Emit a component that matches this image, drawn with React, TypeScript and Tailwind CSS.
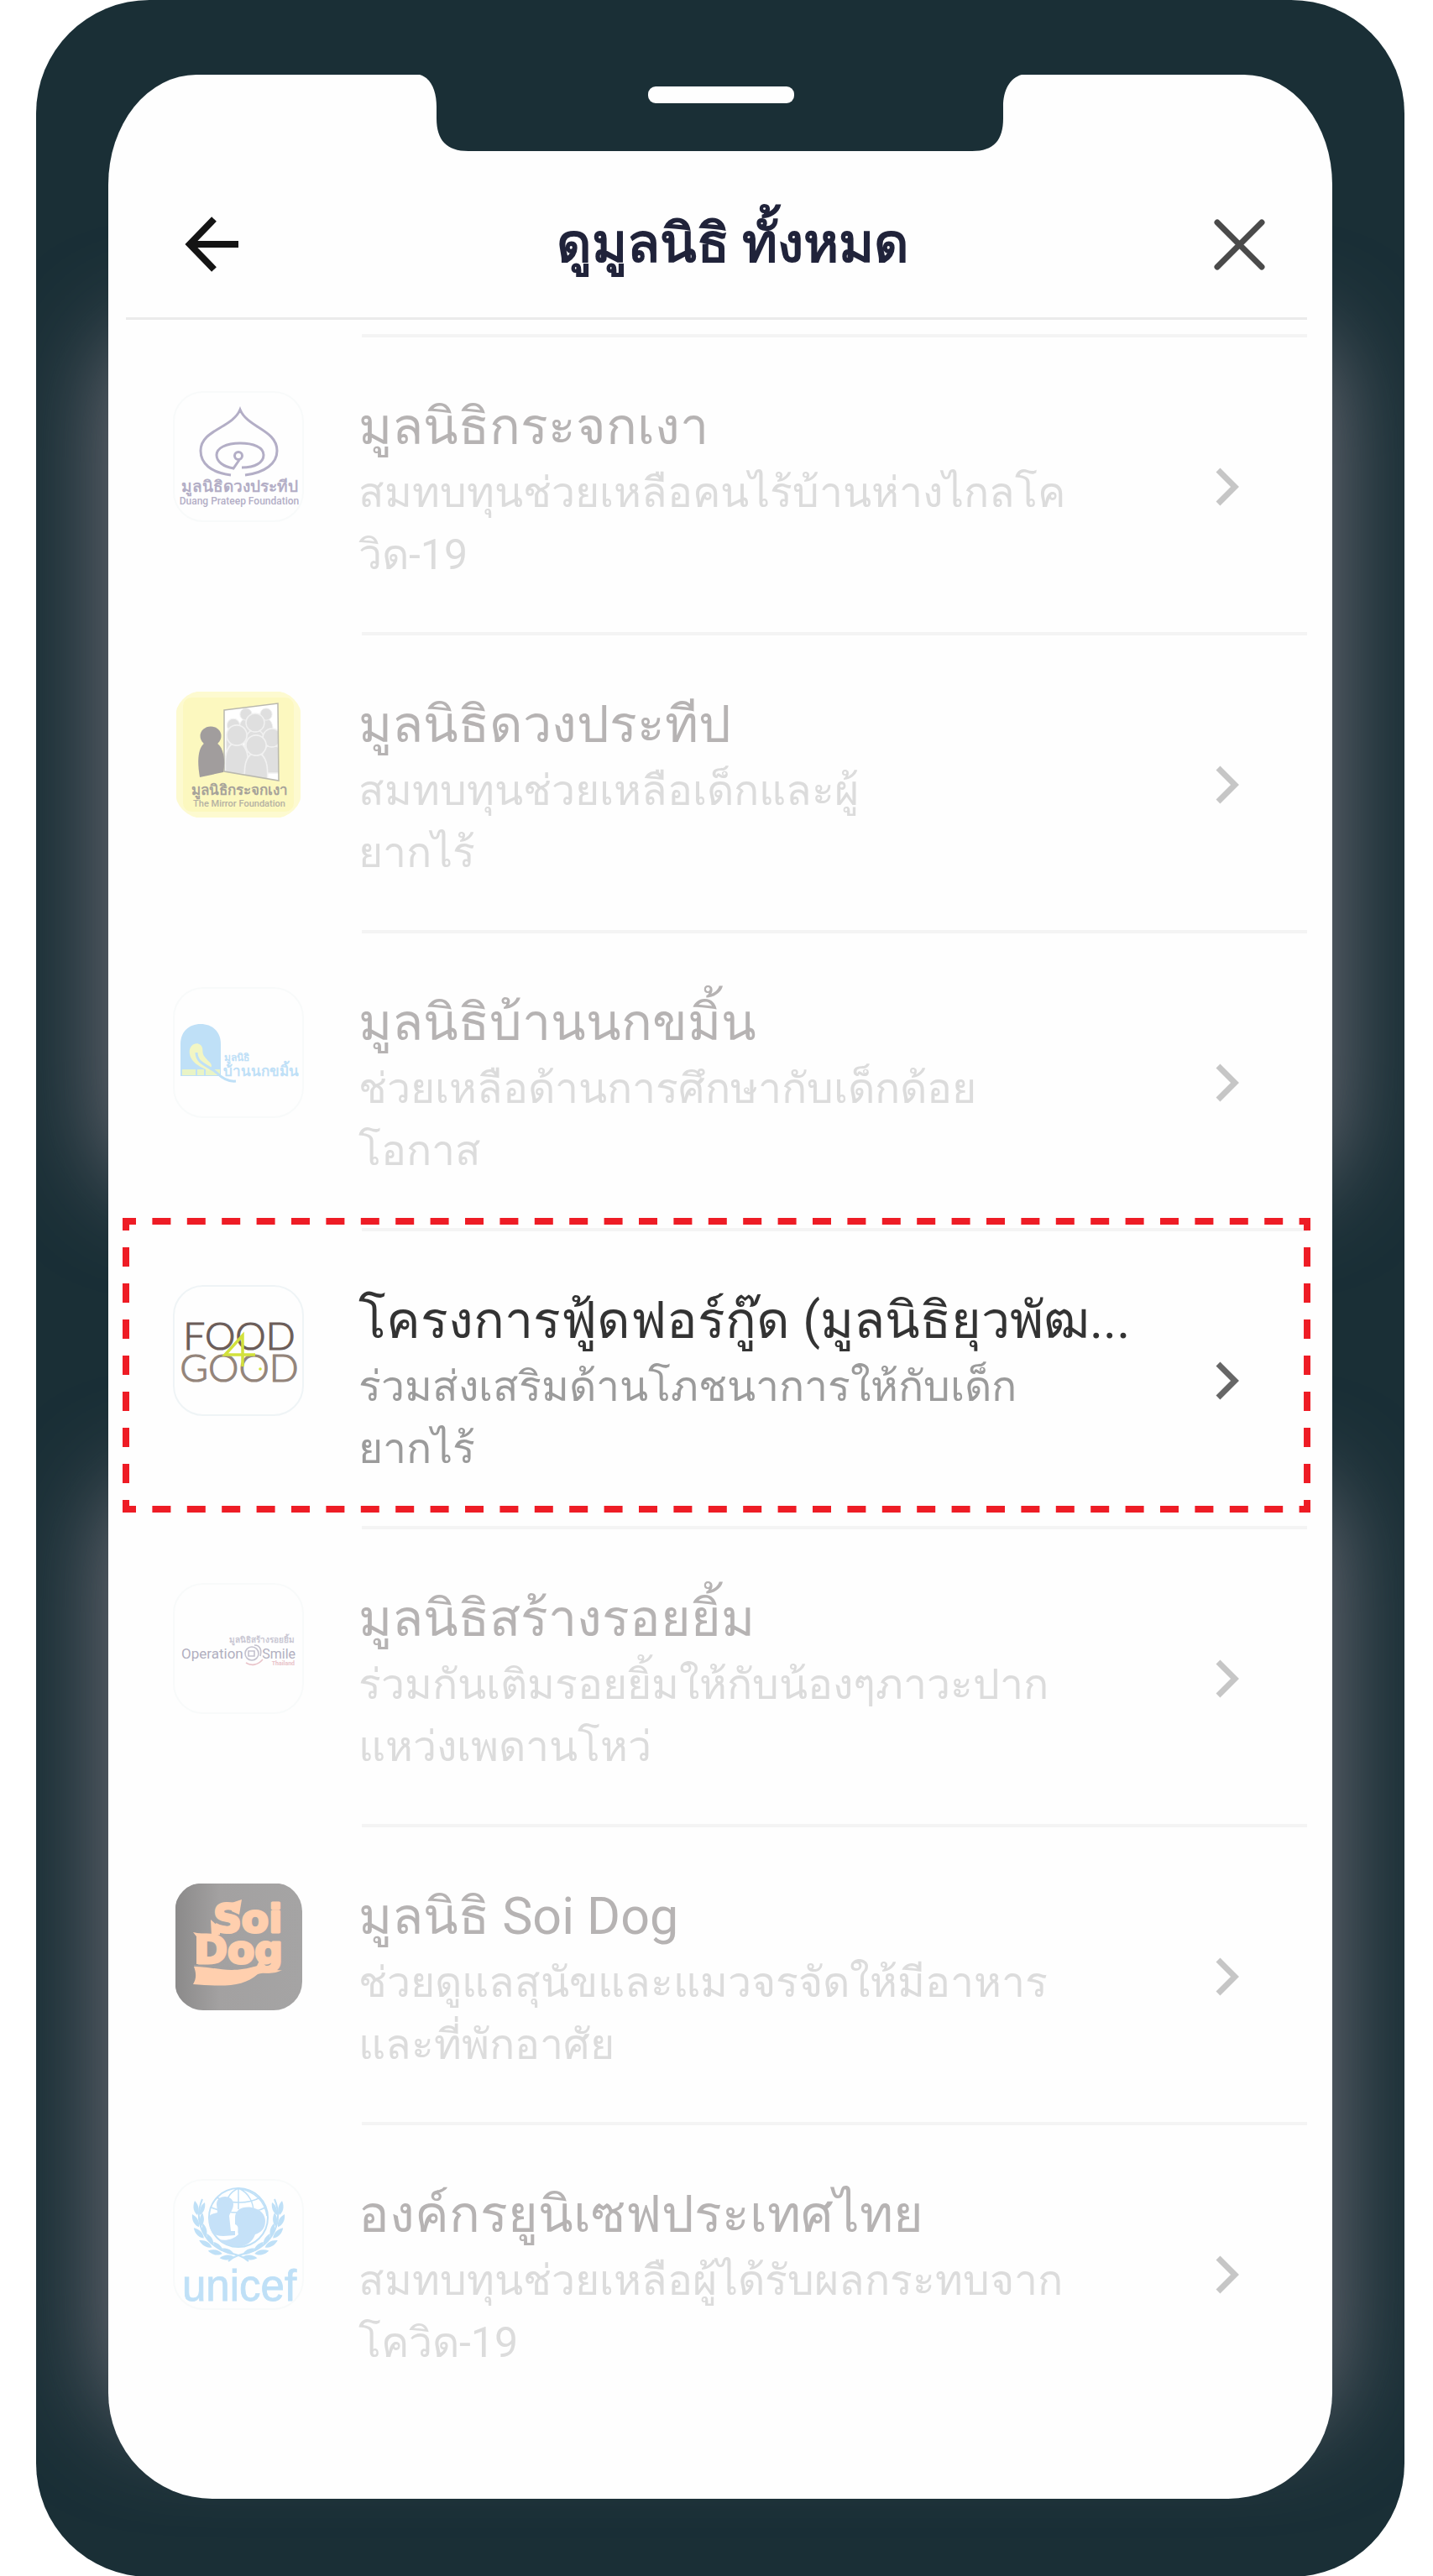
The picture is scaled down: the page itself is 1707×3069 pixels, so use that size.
import type { ReactNode } from "react";

const LILAC = "#b3aec6";
const SKY = "#bfe0f7";

function DuangPrateepLogo() {
  return (
    <>
      <g fill="none" stroke={LILAC} strokeWidth="3">
        <path d="M69 100C45 97 33 86 33 71C33 46 71 44 80 22C89 44 124 46 124 71C124 86 110 97 86 100" />
        <path d="M82 91C98 91 108 85 108 76C108 67 96 62 80 62C63 62 52 68 52 76C52 84 60 90 72 92L79 82" />
        <circle cx="78" cy="77" r="4.5" />
      </g>
      <text x="79" y="120" textAnchor="middle" fontSize="19" fontWeight="700" fill={LILAC}>มูลนิธิดวงประทีป</text>
      <text x="79" y="135" textAnchor="middle" fontSize="12" fontWeight="500" fill={LILAC}>Duang Prateep Foundation</text>
    </>
  );
}

function Figure({ x, y, s }: { x: number; y: number; s: number }) {
  return (
    <g transform={`translate(${x} ${y}) scale(${s})`} fill="#dfdfdf" stroke="#f1f1f1" strokeWidth="1.5">
      <path d="M-12 42C-13 28 -13 16 -6 10L6 10C13 16 13 28 12 42Z" />
      <ellipse cx="0" cy="0" rx="11" ry="11" />
    </g>
  );
}

function MirrorLogo() {
  return (
    <>
      <rect x="4" y="3" width="148" height="150" rx="24" fill="#fdfad0" />
      <rect x="12" y="10" width="132" height="136" rx="10" fill="#fcf8bf" />
      <clipPath id="mirror-glass">
        <path d="M61 25L125 17L126 109L61 98Z" />
      </clipPath>
      <g clipPath="url(#mirror-glass)">
        <rect x="60" y="15" width="70" height="96" fill="#fff" />
        <Figure x={87} y={30} s={0.65} />
        <Figure x={111} y={30} s={0.65} />
        <Figure x={72} y={43} s={0.7} />
        <Figure x={98} y={40} s={1} />
        <Figure x={118} y={58} s={1} />
        <Figure x={76} y={55} s={1.1} />
        <Figure x={99} y={67} s={1.1} />
      </g>
      <path d="M61 25L125 17L126 109L61 98Z" fill="none" stroke="#b9b8ae" strokeWidth="1.5" />
      <g fill="#a19d9d">
        <ellipse cx="45" cy="56" rx="12.5" ry="11.5" />
        <path d="M38 64L52 64C60 69 63 84 60 99L32 105C29 88 29 70 38 64Z" />
      </g>
      <text x="79" y="126" textAnchor="middle" fontSize="17" fontWeight="700" fill="#a7a39a">มูลนิธิกระจกเงา</text>
      <text x="79" y="140" textAnchor="middle" fontSize="11" fontWeight="500" fill="#b5b1a3">The Mirror Foundation</text>
    </>
  );
}

function BaanNokkaminLogo() {
  return (
    <>
      <path d="M9 106V68C9 53 19 44 33 44C47 44 57 53 57 68V106Z" fill={SKY} />
      <path d="M11 98H56V105H11Z" fill="#e9f4c6" />
      <path d="M28 98V105M38 98V105" stroke={SKY} strokeWidth="2" />
      <path d="M20 80C18 70 27 64 33 69C37 73 34 77 37 82C41 88 46 90 46 94L43 100C32 95 22 90 20 80Z" fill="#f2f6c4" />
      <path d="M28 78C28 92 44 94 52 102C59 109 66 113 75 112" fill="none" stroke={SKY} strokeWidth="3" />
      <text x="61" y="88" fontSize="12" fontWeight="700" fill={SKY}>มูลนิธิ</text>
      <text x="60" y="106" fontSize="17" fontWeight="700" fill={SKY}>บ้านนกขมิ้น</text>
    </>
  );
}

function FoodForGoodLogo() {
  return (
    <>
      <text x="79" y="77" textAnchor="middle" fontSize="46" strokeWidth="1.2" className="font-[Lato] font-light" fill="#6b5d59" stroke="#6b5d59">FOOD</text>
      <text x="79" y="115" textAnchor="middle" fontSize="46" strokeWidth="1.2" className="font-[Lato] font-light" fill="#93847a" stroke="#93847a">GOOD</text>
      <path d="M83 97V60L62 83H98" fill="none" stroke="#d2e13c" strokeWidth="3.5" />
      <circle cx="104" cy="100" r="1.8" fill="#d2e13c" />
    </>
  );
}

function OperationSmileLogo() {
  return (
    <>
      <text x="145" y="71" textAnchor="end" fontSize="10" fontWeight="600" fill="#c9c7d3">มูลนิธิสร้างรอยยิ้ม</text>
      <text x="10" y="90" fontSize="17" fill="#b1afbf">Operation</text>
      <text x="146" y="90" textAnchor="end" fontSize="16" fill="#b1afbf">Smile</text>
      <g fill="none" strokeWidth="1.6" stroke="#c3c1ce">
        <circle cx="94" cy="84" r="8" />
        <path d="M90 81H97V87H90ZM97 74C104 74 106 80 104 87" />
        <path d="M87 95C93 99 101 98 107 91" stroke="#e9c3c9" />
      </g>
      <text x="145" y="98" textAnchor="end" fontSize="7" fontWeight="700" fill="#e9c3c9">Thailand</text>
    </>
  );
}

function SoiDogLogo() {
  return (
    <>
      <linearGradient id="soi-dog-shade">
        <stop offset="0" stopColor="#8b8a8a" />
        <stop offset="0.35" stopColor="#a3a1a1" />
        <stop offset="1" stopColor="#a5a4a4" />
      </linearGradient>
      <rect x="3" y="3" width="151" height="151" rx="28" fill="url(#soi-dog-shade)" />
      <g fill="#ffcfae" stroke="#ffcfae" strokeWidth="3" strokeLinejoin="round" className="font-['DejaVu_Sans'] font-bold">
        <text x="48" y="61" fontSize="47">Soi</text>
        <text x="26" y="98" fontSize="47">Dog</text>
      </g>
      <path d="M24 61L34 63V99H28V66ZM45 46L56 56V64L46 66ZM70 26L82 22L79 40L70 36Z" fill="#ffcfae" />
      <path d="M25 102C48 101 66 112 100 101L104 93C108 101 118 108 130 106C120 112 108 108 101 111C84 126 62 126 24 123C28 116 28 110 25 102Z" fill="#ffcfae" />
      <path d="M25 101C52 100 72 107 100 100" fill="none" stroke="#a3a1a1" strokeWidth="2" />
    </>
  );
}

function UnicefLogo() {
  const leaves = [0, 1, 2, 3, 4, 5];
  return (
    <>
      <circle cx="78" cy="46" r="35" fill="#fff" stroke={SKY} strokeWidth="2" />
      <g fill="none" stroke={SKY} strokeWidth="1.5">
        <path d="M78 11V36M78 11C64 17 62 30 62 40M78 11C92 17 96 30 96 40M78 11C102 16 110 30 112 44M52 22C68 30 90 30 104 22M46 34C64 42 96 42 110 34" />
      </g>
      <g fill="#c5e1f8">
        <path d="M52 30C52 18 72 18 72 30C72 36 68 40 67 44L69 62L74 62V67L60 68C48 68 44 64 43 50C42 42 46 42 53 40Z" />
        <path d="M74 46C74 36 84 32 94 34C104 36 110 42 110 50C110 60 104 64 98 66C94 78 82 82 72 80C64 79 58 77 54 72C64 74 72 72 78 66C76 62 80 56 74 54Z" />
      </g>
      {[1, -1].map((dir) => (
        <g key={dir} transform={dir === 1 ? undefined : "translate(156 0) scale(-1 1)"}>
          <path d="M35 24C24 50 36 78 66 88C76 90 84 92 90 98" fill="none" stroke={SKY} strokeWidth="2" />
          {leaves.map((i) => (
            <g key={i} transform={`rotate(${-i * 17} 78 44)`}>
              <path d="M29 43C23 38 24 30 26 26C31 31 32 38 29 43Z" fill={SKY} />
              <path d="M32 43C31 36 34 30 38 28C39 34 37 40 32 43Z" fill={SKY} />
            </g>
          ))}
        </g>
      ))}
      <text x="79" y="145" textAnchor="middle" fontSize="51" strokeWidth="0.8" className="font-['Liberation_Sans']" fill={SKY} stroke={SKY}>unicef</text>
    </>
  );
}

type Foundation = {
  name: string;
  lines: [string, string];
  logo: ReactNode;
  frame: string;
  active?: boolean;
};

const foundations: Foundation[] = [
  { name: "มูลนิธิกระจกเงา", lines: ["สมทบทุนช่วยเหลือคนไร้บ้านห่างไกลโค", "วิด-19"], logo: <DuangPrateepLogo />, frame: "border-[#f8fafa]" },
  { name: "มูลนิธิดวงประทีป", lines: ["สมทบทุนช่วยเหลือเด็กและผู้", "ยากไร้"], logo: <MirrorLogo />, frame: "border-transparent" },
  { name: "มูลนิธิบ้านนกขมิ้น", lines: ["ช่วยเหลือด้านการศึกษากับเด็กด้อย", "โอกาส"], logo: <BaanNokkaminLogo />, frame: "border-[#f8fafa]" },
  { name: "โครงการฟู้ดฟอร์กู๊ด (มูลนิธิยุวพัฒ...", lines: ["ร่วมส่งเสริมด้านโภชนาการให้กับเด็ก", "ยากไร้"], logo: <FoodForGoodLogo />, frame: "border-[#eff4f6]", active: true },
  { name: "มูลนิธิสร้างรอยยิ้ม", lines: ["ร่วมกันเติมรอยยิ้มให้กับน้องๆภาวะปาก", "แหว่งเพดานโหว่"], logo: <OperationSmileLogo />, frame: "border-[#f8fafa]" },
  { name: "มูลนิธิ Soi Dog", lines: ["ช่วยดูแลสุนัขและแมวจรจัดให้มีอาหาร", "และที่พักอาศัย"], logo: <SoiDogLogo />, frame: "border-transparent" },
  { name: "องค์กรยูนิเซฟประเทศไทย", lines: ["สมทบทุนช่วยเหลือผู้ได้รับผลกระทบจาก", "โควิด-19"], logo: <UnicefLogo />, frame: "border-[#f8fafa]" },
];

function DashedFrame() {
  return (
    <svg className="pointer-events-none absolute -top-3 -left-1 h-[351px] w-[calc(100%+8px)]" fill="none" stroke="#ee1c25" strokeWidth="8" aria-hidden="true">
      <g strokeDasharray="22 19.4">
        <line x1="-6" y1="4" x2="100%" y2="4" />
        <line x1="-6" y1="347" x2="100%" y2="347" />
      </g>
      <g strokeDasharray="23 20">
        <line x1="4" y1="-8" x2="4" y2="100%" />
        <line x1="99.72%" y1="-8" x2="99.72%" y2="100%" />
      </g>
    </svg>
  );
}

function FoundationRow({ item }: { item: Foundation }) {
  return (
    <li className="relative">
      <a href="#" className="flex h-[355px]">
        <div className="w-[281px] shrink-0 pt-[68px] pl-14">
          <svg viewBox="2 2 152 152" className={`size-[156px] rounded-[36px] border-2 ${item.frame}`} aria-hidden="true">
            {item.logo}
          </svg>
        </div>
        <div className="flex min-w-0 grow items-center justify-between border-t-4 border-[#f4f4f4] pt-1 pr-20">
          <div className="-ml-1 pt-2 whitespace-nowrap">
            <h2 className={`mb-1 text-[61px] leading-[76px] ${item.active ? "text-[#333333]" : "text-[#b6b3b3]"}`}>{item.name}</h2>
            <p className={`text-[50px] leading-[74px] ${item.active ? "text-[#9b9b9b]" : "text-[#dcdcdc]"}`}>
              {item.lines[0]}
              <br />
              {item.lines[1]}
            </p>
          </div>
          <svg width="30" height="48" viewBox="0 0 30 48" fill="none" strokeWidth="7" className={item.active ? "shrink-0 stroke-[#666666]" : "shrink-0 stroke-[#c6c6c6]"} aria-hidden="true">
            <path d="M4 4L24 24L4 44" />
          </svg>
        </div>
      </a>
      {item.active && <DashedFrame />}
    </li>
  );
}

export default function App() {
  return (
    <div className="bg-white font-[Roboto,sans-serif]">
      <main className="relative isolate mr-[34px] ml-[43px] overflow-hidden rounded-[135px] bg-[#1a2f36] px-[86px] pt-[89px] pb-[93px]">
        <div className="absolute inset-x-[86px] top-[400px] -z-10 h-[1010px] rounded-[60px] shadow-[0_0_120px_#7a7780]" />
        <div className="absolute inset-x-[86px] top-[1770px] -z-10 h-[1110px] rounded-[60px] shadow-[0_0_120px_#7a7780]" />
        <div className="bg-[#fefefe] pb-[94px] [border-radius:105px_105px_124px_124px/131px_131px_126px_126px]">
          <svg width="717" height="91" viewBox="0 0 717 91" className="mx-auto" aria-hidden="true">
            <path d="M0 0C14 4 20 20 20 38V52C20 78 32 91 58 91H658C684 91 695 78 695 52V38C695 18 703 4 717 0Z" fill="#1a2f36" />
            <rect x="272" y="14" width="174" height="20" rx="9" fill="#fefefe" />
          </svg>
          <div className="pr-[30px] pl-[21px]">
            <header className="flex h-[201px] items-center justify-between border-b-3 border-[#ebebeb] pt-6 pr-[50px] pl-[70px]">
              <button type="button" aria-label="ย้อนกลับ">
                <svg width="64" height="66" viewBox="0 0 64 66" fill="none" stroke="#141414" strokeWidth="8" aria-hidden="true">
                  <path d="M64 33H6M35 3L6 33L35 63" />
                </svg>
              </button>
              <h1 className="pl-4 text-[64px] leading-[80px] font-bold text-[#20233a]">ดูมูลนิธิ ทั้งหมด</h1>
              <button type="button" aria-label="ปิด">
                <svg width="61" height="61" viewBox="0 0 61 61" stroke="#4a4a4a" strokeWidth="7" strokeLinecap="round" aria-hidden="true">
                  <path d="M4 4L57 57M57 4L4 57" />
                </svg>
              </button>
            </header>
            <ul className="pt-[17px]">
              {foundations.map((item) => (
                <FoundationRow key={item.name} item={item} />
              ))}
            </ul>
          </div>
        </div>
      </main>
    </div>
  );
}
